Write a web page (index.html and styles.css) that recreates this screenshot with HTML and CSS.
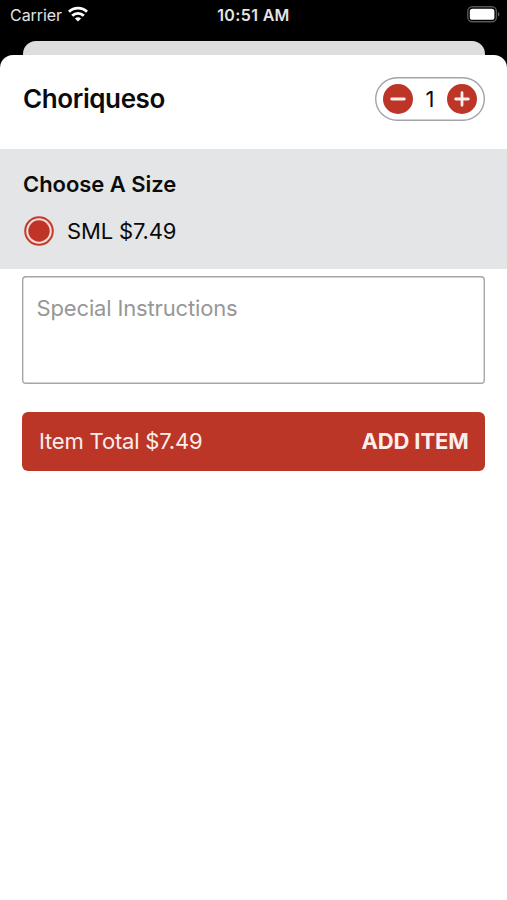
FILE: index.html
```html
<!DOCTYPE html>
<html lang="en">
<head>
<meta charset="utf-8">
<title>Choriqueso</title>
<link rel="stylesheet" href="styles.css">
</head>
<body>
<header class="status">
  <div class="status-left">
    <span class="carrier">Carrier</span>
    <svg class="wifi" width="20" height="16" viewBox="0 0 20 16" fill="none" stroke="#fff" stroke-width="2.9">
      <path d="M1 5.7a13 13 0 0 1 18 0"/>
      <path d="M4.2 9.7a8.3 8.3 0 0 1 11.6 0"/>
      <path d="M10 15.6 6.9 12.6a4.5 4.5 0 0 1 6.2 0z" fill="#fff" stroke="none"/>
    </svg>
  </div>
  <span class="clock">10:51 AM</span>
  <svg class="battery" width="33" height="17" viewBox="0 0 33 17">
    <rect x=".8" y=".8" width="28.6" height="15" rx="4.5" fill="none" stroke="#555" stroke-width="1.4"/>
    <rect x="2.8" y="2.8" width="24.6" height="11" rx="2.6" fill="#fff"/>
    <path d="M31 6v4.6q1.4-.8 1.4-2.3T31 6z" fill="#666"/>
  </svg>
</header>
<div class="back-card"></div>
<main class="sheet">
  <section class="head">
    <h1 class="title">Choriqueso</h1>
    <div class="stepper">
      <button class="step" aria-label="Decrease"><svg width="30" height="30" viewBox="0 0 30 30"><path d="M8.7 15h12.6"/></svg></button>
      <span class="qty">1</span>
      <button class="step" aria-label="Increase"><svg width="30" height="30" viewBox="0 0 30 30"><path d="M8.7 15h12.6M15 8.7v12.6"/></svg></button>
    </div>
  </section>
  <section class="sizes">
    <h2 class="subtitle">Choose A Size</h2>
    <div class="option">
      <svg class="radio" width="30" height="30" viewBox="0 0 30 30">
        <circle cx="15" cy="15" r="13.8" fill="#f3dcd9" stroke="#c43b2b" stroke-width="2"/>
        <circle cx="15" cy="15" r="10.7" fill="#bf3424"/>
      </svg>
      <span class="option-text">SML $7.49</span>
    </div>
  </section>
  <div class="notes">Special Instructions</div>
  <div class="add">
    <span class="total">Item Total $7.49</span>
    <span class="action">ADD ITEM</span>
  </div>
</main>
</body>
</html>
```
FILE: styles.css
```css
* { box-sizing: border-box; }
body {
  margin: 0;
  height: 900px;
  display: flex;
  flex-direction: column;
  background: #000;
  color: #0b0b0b;
  font-family: Inter, "Liberation Sans", sans-serif;
  overflow: hidden;
}
.status {
  height: 41px;
  display: grid;
  grid-template-columns: 1fr auto 1fr;
  align-items: start;
  padding: 6px 7px 0 10px;
  color: #e4e4e4;
}
.status-left { display: flex; justify-content: space-between; width: 78px; }
.carrier { font-size: 16px; line-height: 19px; letter-spacing: -0.05px; }
.clock { margin-left: -3px; font-size: 16px; line-height: 19px; font-weight: 600; letter-spacing: 0.35px; }
.battery { justify-self: end; }
.back-card {
  height: 14px;
  margin: 0 22px 0 23px;
  background: #dedede;
  border-radius: 13px 13px 0 0;
}
.sheet {
  flex: 1;
  background: #fff;
  border-radius: 13px 13px 0 0;
}
.head {
  height: 94.4px;
  padding: 0 22px 7px 23px;
  display: flex;
  align-items: center;
  justify-content: space-between;
}
.title { margin: 0; font-size: 26px; line-height: 32px; font-weight: 600; letter-spacing: -0.4px; }
.stepper {
  width: 110px;
  height: 44px;
  padding: 0 8px;
  display: flex;
  align-items: center;
  justify-content: space-between;
  border-radius: 22px;
  box-shadow: inset 0 0 0 1.4px #a3a3a7;
}
.step {
  width: 30px;
  height: 30px;
  padding: 0;
  border: 0;
  border-radius: 50%;
  background: #bd3526;
}
.step svg { display: block; fill: none; stroke: #fbeeee; stroke-width: 2.8; stroke-linecap: round; }
.qty { font-size: 22px; line-height: 28px; }
.sizes { height: 119.6px; padding: 20.6px 23px 0; background: #e3e5e7; }
.subtitle { margin: 0; font-size: 22px; line-height: 28px; font-weight: 600; letter-spacing: -0.05px; }
.option { display: flex; align-items: center; gap: 13px; margin-top: 18px; height: 30px; }
.radio { margin-left: 1px; }
.option-text { font-size: 22px; line-height: 28px; letter-spacing: -0.15px; }
.notes {
  height: 108px;
  margin: 7px 22px 0;
  padding: 18px 14.5px;
  border-radius: 4px;
  box-shadow: inset 0 0 0 1.4px #a6a6a6;
  color: #979797;
  font-size: 22px;
  line-height: 28px;
  letter-spacing: -0.15px;
}
.add {
  height: 59px;
  margin: 28px 22px 0;
  padding: 0 16.5px 1px 17px;
  display: flex;
  align-items: center;
  justify-content: space-between;
  border-radius: 6px;
  background: #bb3626;
  color: #fbeeec;
  font-size: 22px;
  line-height: 28px;
}
.total { letter-spacing: -0.18px; }
.action { font-weight: 700; letter-spacing: -0.15px; }
```
